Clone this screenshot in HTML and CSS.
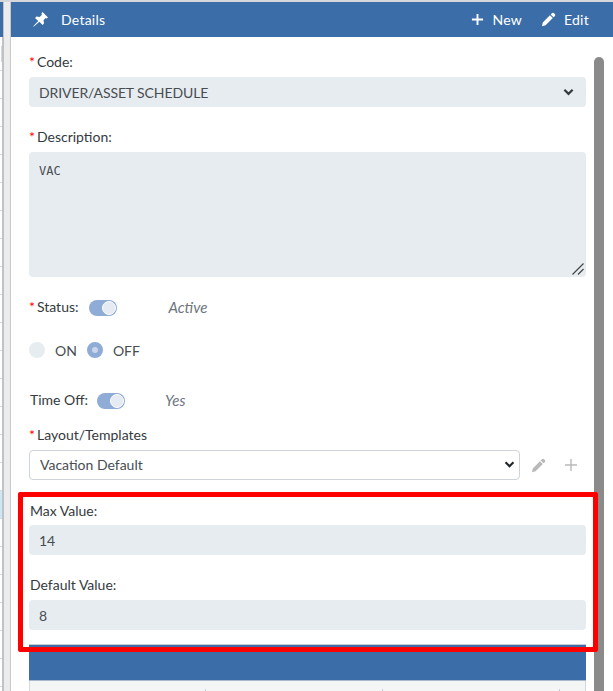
FILE: index.html
```html
<!DOCTYPE html>
<html lang="en">
<head>
    <meta charset="UTF-8">
    <title>Details</title>
    <link rel="stylesheet" href="styles.css">
</head>
<body>
    <div class="page">
        <div class="side">
            <div class="side-head"></div>
            <div class="side-row side-row-first"><span class="side-bar"></span></div>
            <div class="side-row"></div>
            <div class="side-row"></div>
            <div class="side-row"></div>
            <div class="side-row"></div>
            <div class="side-row"></div>
            <div class="side-row"></div>
            <div class="side-row"></div>
            <div class="side-row"></div>
            <div class="side-row"></div>
            <div class="side-row"></div>
            <div class="side-row"></div>
            <div class="side-row"></div>
            <div class="side-row"></div>
            <div class="side-row"></div>
            <div class="side-row"></div>
            <div class="side-row side-row-on"></div>
            <div class="side-row"></div>
            <div class="side-row"></div>
            <div class="side-row"></div>
            <div class="side-row"></div>
            <div class="side-row"></div>
            <div class="side-row"></div>
        </div>
        <div class="splitter"></div>
        <div class="panel">
            <header class="panel-head">
                <div class="panel-title">
                    <svg class="icon pin" viewBox="0 0 16 16"><path d="M10.2 0l5.8 5.8-1.5 1.2-1-.5-2.3 2.4.5 3.4-1.5 1.5-3.4-3.4L1.6 15l-1.6 1 1-1.6 4.6-4.7-3.4-3.4 1.5-1.5 3.4.5L9.5 3l-.5-1.5z"/></svg>
                    <span>Details</span>
                </div>
                <div class="panel-actions">
                    <a class="action"><svg class="icon" viewBox="0 0 14 14"><path d="M6 1h2v5h5v2H8v5H6V8H1V6h5z"/></svg>New</a>
                    <a class="action"><svg class="icon pencil" viewBox="0 0 16 16"><path d="M11.6 1.3a1.6 1.6 0 0 1 2.3 0l.8.8a1.6 1.6 0 0 1 0 2.3l-1.3 1.3-3.1-3.1zM9.5 3.4l3.1 3.1-7.7 7.7-3.9.9.9-4z"/></svg>Edit</a>
                </div>
            </header>
            <div class="panel-body">
                <div class="form">
                    <div class="field field-code">
                        <label class="label"><i class="req">*</i>Code:</label>
                        <div class="input select">
                            <span class="code-text">DRIVER/ASSET SCHEDULE</span>
                            <svg class="chevron" viewBox="0 0 12 8"><path d="M1.5 1.5L6 6l4.5-4.5"/></svg>
                        </div>
                    </div>
                    <div class="field field-desc">
                        <label class="label"><i class="req">*</i>Description:</label>
                        <div class="textarea">VAC
                            <svg class="grip" viewBox="0 0 12 12"><path d="M.5 11.5L11.5.5M6 11.5L11.5 6"/></svg>
                        </div>
                    </div>
                    <div class="row row-status">
                        <label class="label"><i class="req">*</i>Status:</label>
                        <span class="toggle"><span class="knob"></span></span>
                        <em class="state state-active">Active</em>
                    </div>
                    <div class="row row-radio">
                        <span class="radio"></span><span class="radio-text">ON</span>
                        <span class="radio radio-on"></span><span class="radio-text">OFF</span>
                    </div>
                    <div class="row row-timeoff">
                        <label class="label label-plain">Time Off:</label>
                        <span class="toggle"><span class="knob"></span></span>
                        <em class="state state-yes">Yes</em>
                    </div>
                    <div class="field field-layout">
                        <label class="label"><i class="req">*</i>Layout/Templates</label>
                        <div class="layout-row">
                            <div class="input dropdown">
                                <span>Vacation Default</span>
                                <svg class="chevron chevron-small" viewBox="0 0 12 8"><path d="M1.5 1.5L6 6l4.5-4.5"/></svg>
                            </div>
                            <svg class="tool" viewBox="0 0 16 16"><path d="M11.6 1.3a1.6 1.6 0 0 1 2.3 0l.8.8a1.6 1.6 0 0 1 0 2.3l-1.3 1.3-3.1-3.1zM9.5 3.4l3.1 3.1-7.7 7.7-3.9.9.9-4z"/></svg>
                            <svg class="tool tool-plus" viewBox="0 0 14 14"><path d="M6.3 1h1.4v5.3H13v1.4H7.7V13H6.3V7.7H1V6.3h5.3z"/></svg>
                        </div>
                    </div>
                    <div class="field field-max">
                        <label class="label label-plain">Max Value:</label>
                        <div class="input number">14</div>
                    </div>
                    <div class="field field-default">
                        <label class="label label-plain">Default Value:</label>
                        <div class="input number">8</div>
                    </div>
                    <div class="grid">
                        <div class="grid-head"></div>
                        <div class="grid-row">
                            <span class="grid-cell grid-cell-first"></span>
                            <span class="grid-cell"></span>
                            <span class="grid-cell"></span>
                        </div>
                    </div>
                </div>
                <div class="scrollbar"></div>
            </div>
        </div>
        <div class="highlight"></div>
    </div>
</body>
</html>
```

FILE: styles.css
```css
html, body {
    margin: 0;
    padding: 0;
    height: 100%;
    overflow: hidden;
    background: #fff;
}
body {
    font-family: Lato, "Open Sans", sans-serif;
    font-size: 14px;
    color: #343a40;
}
.page {
    position: relative;
    display: flex;
    width: 613px;
    height: 691px;
    box-sizing: border-box;
    border-top: 2px solid #d5d7da;
    overflow: hidden;
}
.side {
    width: 2px;
    flex: none;
}
.side-head {
    position: relative;
    width: 3px;
    height: 35px;
    background: #3b6ea8;
}
.side-row {
    height: 27px;
    border-bottom: 1px solid #d5d9de;
}
.side-row-first {
    height: 32px;
    padding-top: 1px;
    box-sizing: content-box;
}
.side-bar {
    display: block;
    width: 1px;
    height: 16px;
    margin: 8px 0 0 1px;
    background: #d5d9de;
}
.side-row-on {
    background: #cfe6f7;
}
.splitter {
    width: 9px;
    flex: none;
    box-sizing: border-box;
    background: #ececec;
    border-left: 2px solid #bfc3c8;
    border-right: 1px solid #c9c9c9;
}
.panel {
    flex: 1;
    min-width: 0;
    display: flex;
    flex-direction: column;
}
.panel-head {
    height: 35px;
    background: #3b6ea8;
    color: #fff;
    display: flex;
    align-items: center;
    justify-content: space-between;
    padding: 0 24px 0 22px;
    flex: none;
    letter-spacing: .25px;
}
.panel-title {
    display: flex;
    align-items: center;
    gap: 13px;
}
.panel-actions {
    display: flex;
    gap: 19px;
}
.action {
    display: flex;
    align-items: center;
    gap: 8px;
}
.icon {
    width: 13px;
    height: 13px;
    fill: #fff;
}
.pin {
    width: 15px;
    height: 15px;
}
.pencil {
    width: 15px;
    height: 15px;
}
.panel-body {
    flex: 1;
    display: flex;
    min-height: 0;
}
.form {
    width: 557px;
    padding: 16px 0 0 18px;
    flex: none;
}
.scrollbar {
    width: 10px;
    height: 700px;
    margin: 20px 0 0 8px;
    background: #8a8a8a;
    border-radius: 5px 5px 0 0;
    flex: none;
}
.label {
    display: block;
    line-height: 17px;
    color: #343a40;
}
.label-plain {
    padding-left: 1px;
}
.row .label-plain {
    margin-right: -1px;
}
.req {
    color: #f00;
    font-style: normal;
    margin-right: 2px;
}
.input {
    background: #e7ecf0;
    border-radius: 4px;
    height: 30px;
    box-sizing: border-box;
    display: flex;
    align-items: center;
    justify-content: space-between;
    padding: 0 12px 0 10px;
    margin-top: 7px;
    color: #484d52;
}
.code-text {
    letter-spacing: -.1px;
}
.chevron {
    width: 11px;
    height: 8px;
    fill: none;
    stroke: #343a40;
    stroke-width: 2.4;
}
.chevron-small {
    height: 7px;
    margin-right: -6px;
    stroke: #212529;
}
.field-desc {
    margin-top: 21px;
}
.textarea {
    position: relative;
    background: #e7ecf0;
    border-radius: 4px;
    height: 125px;
    margin-top: 7px;
    padding: 12px 10px;
    box-sizing: border-box;
    font-family: "DejaVu Sans Mono", monospace;
    font-size: 12px;
    line-height: 15px;
    color: #484d52;
}
.grip {
    position: absolute;
    right: 2px;
    bottom: 2px;
    width: 12px;
    height: 12px;
    fill: none;
    stroke: #444;
    stroke-width: 1.2;
}
.row {
    display: flex;
    align-items: center;
}
.row-status {
    margin-top: 21px;
    height: 17px;
}
.toggle {
    width: 28px;
    height: 16px;
    border-radius: 8px;
    background: #8eacd6;
    margin: 2px 0 0 10px;
    position: relative;
    flex: none;
}
.knob {
    position: absolute;
    right: 1px;
    top: 1px;
    width: 12px;
    height: 12px;
    border-radius: 50%;
    background: #e6ebf3;
    border: 1px solid #fff;
}
.state {
    color: #6c757d;
    font-size: 15px;
}
.state-active {
    margin-left: 52px;
}
.state-yes {
    margin-left: 40px;
}
.row-radio {
    margin-top: 27px;
    height: 16px;
}
.radio {
    width: 16px;
    height: 16px;
    border-radius: 50%;
    background: #e7ecf0;
    flex: none;
    box-sizing: border-box;
}
.radio-on {
    background: #8eacd6;
    border: 5px solid #8eacd6;
}
.radio-on::after {
    content: "";
    display: block;
    width: 6px;
    height: 6px;
    border-radius: 50%;
    background: #c9d6ea;
}
.radio-text {
    margin: 0 10px;
    color: #484d52;
}
.row-timeoff {
    margin-top: 33px;
    height: 17px;
}
.field-layout {
    margin-top: 18px;
}
.layout-row {
    display: flex;
    align-items: center;
    margin-top: 7px;
}
.dropdown {
    width: 491px;
    flex: none;
    margin-top: 0;
    padding: 0 10px 1px;
    background: #fff;
    border: 1px solid #ced4da;
}
.tool {
    width: 15px;
    height: 15px;
    fill: #b9b9b9;
    margin-left: 11px;
}
.tool-plus {
    width: 14px;
    height: 14px;
    margin-left: 18px;
}
.field-max {
    margin-top: 22px;
}
.field-max .input {
    margin-top: 6px;
}
.field-default {
    margin-top: 21px;
}
.grid {
    margin-top: 14px;
    border-top: 1px solid #c6ccd3;
}
.grid-head {
    height: 35px;
    background: #3b6ea8;
    border-bottom: 1px solid #a9b8c8;
}
.grid-row {
    display: flex;
    height: 30px;
    padding-top: 8px;
    background: #f4f6f6;
    border-left: 1px solid #d5d9de;
    border-right: 1px solid #d5d9de;
}
.grid-cell {
    width: 177px;
    height: 12px;
    box-sizing: border-box;
    border-right: 1px solid #c6ccd3;
}
.grid-cell-first {
    width: 176px;
}
.highlight {
    position: absolute;
    left: 18px;
    top: 490px;
    width: 580px;
    height: 160px;
    box-sizing: border-box;
    border: 5px solid #f00;
    border-radius: 2px;
}
```
